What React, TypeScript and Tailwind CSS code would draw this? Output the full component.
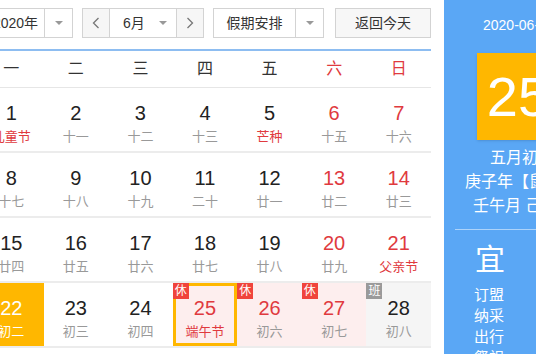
import React from 'react';

type Day = {
  n: number;
  sub: string;
  redNum?: boolean;
  redSub?: boolean;
  badge?: '休' | '班';
  today?: boolean;
  selected?: boolean;
};

const weeks: Day[][] = [
  [
    { n: 1, sub: '儿童节', redSub: true },
    { n: 2, sub: '十一' },
    { n: 3, sub: '十二' },
    { n: 4, sub: '十三' },
    { n: 5, sub: '芒种', redSub: true },
    { n: 6, sub: '十五', redNum: true },
    { n: 7, sub: '十六', redNum: true },
  ],
  [
    { n: 8, sub: '十七' },
    { n: 9, sub: '十八' },
    { n: 10, sub: '十九' },
    { n: 11, sub: '二十' },
    { n: 12, sub: '廿一' },
    { n: 13, sub: '廿二', redNum: true },
    { n: 14, sub: '廿三', redNum: true },
  ],
  [
    { n: 15, sub: '廿四' },
    { n: 16, sub: '廿五' },
    { n: 17, sub: '廿六' },
    { n: 18, sub: '廿七' },
    { n: 19, sub: '廿八' },
    { n: 20, sub: '廿九', redNum: true },
    { n: 21, sub: '父亲节', redNum: true, redSub: true },
  ],
  [
    { n: 22, sub: '初二', today: true },
    { n: 23, sub: '初三' },
    { n: 24, sub: '初四' },
    { n: 25, sub: '端午节', redNum: true, redSub: true, badge: '休', selected: true },
    { n: 26, sub: '初六', redNum: true, badge: '休' },
    { n: 27, sub: '初七', redNum: true, badge: '休' },
    { n: 28, sub: '初八', badge: '班' },
  ],
];

const weekdays = ['一', '二', '三', '四', '五', '六', '日'];

function Caret() {
  return <span className="w-0 h-0 border-l-[4px] border-r-[4px] border-t-[4px] border-l-transparent border-r-transparent border-t-[#999]" />;
}

function Chevron({ dir }: { dir: 'left' | 'right' }) {
  return (
    <svg width="8" height="12" viewBox="0 0 8 12" fill="none">
      <path
        d={dir === 'left' ? 'M6.5 1 L1.5 6 L6.5 11' : 'M1.5 1 L6.5 6 L1.5 11'}
        stroke="#777"
        strokeWidth="1.3"
      />
    </svg>
  );
}

function DayCell({ d }: { d: Day }) {
  let bg = '';
  if (d.today) bg = 'bg-[#ffb700]';
  else if (d.badge === '休') bg = 'bg-[#fdeeee]';
  else if (d.badge === '班') bg = 'bg-[#f5f5f5]';

  const numColor = d.today ? 'text-white' : d.redNum ? 'text-[#e03a3e]' : 'text-[#222]';
  const subColor = d.today ? 'text-white' : d.redSub ? 'text-[#e03a3e]' : 'text-[#999]';

  return (
    <div className={`relative flex flex-col items-center pt-[13px] h-[65px] border-b-2 border-[#ececec] ${bg}`}>
      {d.selected && <div className="absolute left-0 right-0 top-0 bottom-0 border-[3px] border-[#ffb700]" />}
      {d.badge && (
        <span
          className={`absolute top-0 left-0 z-10 w-[16px] h-[16px] text-[12px] leading-[16px] text-center text-white ${
            d.badge === '休' ? 'bg-[#f0443c]' : 'bg-[#9a9a9a]'
          }`}
        >
          {d.badge}
        </span>
      )}
      <span className={`text-[20px] leading-[24px] ${numColor}`}>{d.n}</span>
      <span className={`text-[13px] leading-[24px] ${subColor}`}>{d.sub}</span>
    </div>
  );
}

export default function App() {
  return (
    <div className="h-screen overflow-hidden bg-white font-['Liberation_Sans','Noto_Sans_CJK_SC',sans-serif]">
      <div className="flex -ml-[21px]">
        {/* Calendar */}
        <div className="w-[452px] shrink-0">
          <div className="flex items-center h-[30px] mt-[8px] pl-[7px] text-[14px] text-[#333]">
            <div className="flex w-[87px] h-full border border-[#d3d3d3] bg-white">
              <div className="flex-1 flex items-center justify-center">2020年</div>
              <div className="w-[28px] flex items-center justify-center border-l border-[#d3d3d3]">
                <Caret />
              </div>
            </div>
            <div className="flex w-[122px] h-full ml-[9px] border border-[#d3d3d3]">
              <div className="w-[26px] flex items-center justify-center bg-[#f6f6f6]">
                <Chevron dir="left" />
              </div>
              <div className="flex-1 flex items-center justify-between pl-[13px] pr-[9px] border-l border-r border-[#d3d3d3] bg-white">
                <span>6月</span>
                <Caret />
              </div>
              <div className="w-[26px] flex items-center justify-center bg-[#f6f6f6]">
                <Chevron dir="right" />
              </div>
            </div>
            <div className="flex w-[111px] h-full ml-[9px] border border-[#d3d3d3] bg-white">
              <div className="flex-1 flex items-center justify-center">假期安排</div>
              <div className="w-[28px] flex items-center justify-center border-l border-[#d3d3d3]">
                <Caret />
              </div>
            </div>
            <button className="w-[96px] h-full ml-[11px] border border-[#d3d3d3] bg-[#f7f7f7] text-[14px] text-[#333]">
              返回今天
            </button>
          </div>

          <div className="mt-[11px] border-t-2 border-[#8dbdf1]">
            <div className="grid grid-cols-7 h-[37px] border-b border-[#e6e6e6]">
              {weekdays.map((w, i) => (
                <div
                  key={w}
                  className={`flex items-center justify-center text-[16px] ${i >= 5 ? 'text-[#e03a3e]' : 'text-[#333]'}`}
                >
                  {w}
                </div>
              ))}
            </div>
            {weeks.map((week, r) => (
              <div key={r} className="grid grid-cols-7">
                {week.map((d) => (
                  <DayCell key={d.n} d={d} />
                ))}
              </div>
            ))}
          </div>
        </div>

        {/* Day detail panel */}
        <div className="ml-[13px] w-[150px] shrink-0 h-screen bg-[#5aa7f5] text-white whitespace-nowrap">
          <div className="pt-[15px] pl-[39px] text-[14px] leading-[20px]">2020-06-25 星期四</div>
          <div className="mt-[18px] ml-[33px] w-[82px] h-[87px] flex items-center justify-center bg-[#ffb700] text-[56px] leading-none shadow-sm">
            25
          </div>
          <div className="mt-[6px] pl-[46px] text-[16px] leading-[24px]">五月初五</div>
          <div className="pl-[21px] text-[16px] leading-[24px]">庚子年【鼠年】</div>
          <div className="pl-[29px] text-[16px] leading-[24px]">壬午月 己亥日</div>
          <div className="mt-[11px] mx-[11px] h-px bg-white/50" />
          <div className="mt-[12px] pl-[31px] text-[30px] leading-[36px]">宜</div>
          <div className="mt-[6px] pl-[30px] text-[15px] leading-[21px]">
            <div>订盟</div>
            <div>纳采</div>
            <div>出行</div>
            <div>祭祀</div>
          </div>
        </div>
      </div>
    </div>
  );
}
